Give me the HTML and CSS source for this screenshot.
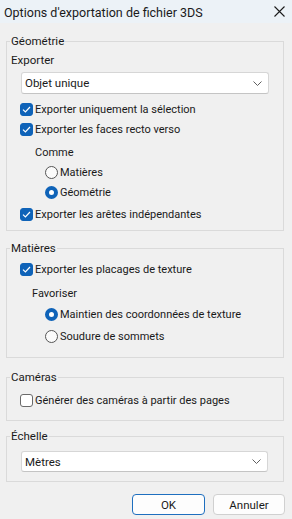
FILE: index.html
```html
<!DOCTYPE html>
<html lang="fr">
<head>
<meta charset="utf-8">
<link rel="stylesheet" href="styles.css">
</head>
<body>
<div class="window">
  <div class="titlebar">
    <span class="title">Options d'exportation de fichier 3DS</span>
    <svg class="close" width="11" height="11" viewBox="0 0 11 11"><path d="M0.5 0.5L10.5 10.5M10.5 0.5L0.5 10.5" stroke="#1b1b1b" stroke-width="1.1" fill="none"/></svg>
  </div>
  <div class="content">
    <fieldset class="group g-geo">
      <legend>Géométrie</legend>
      <div class="row label-row">Exporter</div>
      <div class="select"><span>Objet unique</span><svg class="chev" width="9" height="5" viewBox="0 0 9 5"><path d="M0.5 0.5L4.5 4.5L8.5 0.5" stroke="#5f5f5f" stroke-width="1" fill="none"/></svg></div>
      <div class="row chk-row r1"><span class="chk on"><svg width="9" height="7" viewBox="0 0 9 7"><path d="M1 3.6L3.4 6L8 1" stroke="#fff" stroke-width="1.2" fill="none"/></svg></span>Exporter uniquement la sélection</div>
      <div class="row chk-row"><span class="chk on"><svg width="9" height="7" viewBox="0 0 9 7"><path d="M1 3.6L3.4 6L8 1" stroke="#fff" stroke-width="1.2" fill="none"/></svg></span>Exporter les faces recto verso</div>
      <div class="row sub-label comme">Comme</div>
      <div class="row radio-row"><span class="radio"></span>Matières</div>
      <div class="row radio-row"><span class="radio on"></span>Géométrie</div>
      <div class="row chk-row r-last"><span class="chk on"><svg width="9" height="7" viewBox="0 0 9 7"><path d="M1 3.6L3.4 6L8 1" stroke="#fff" stroke-width="1.2" fill="none"/></svg></span>Exporter les arêtes indépendantes</div>
    </fieldset>

    <fieldset class="group g-mat">
      <legend>Matières</legend>
      <div class="row chk-row m1"><span class="chk on"><svg width="9" height="7" viewBox="0 0 9 7"><path d="M1 3.6L3.4 6L8 1" stroke="#fff" stroke-width="1.2" fill="none"/></svg></span>Exporter les placages de texture</div>
      <div class="row sub-label favor">Favoriser</div>
      <div class="row radio-row m3"><span class="radio on"></span>Maintien des coordonnées de texture</div>
      <div class="row radio-row m4"><span class="radio"></span>Soudure de sommets</div>
    </fieldset>

    <fieldset class="group g-cam">
      <legend>Caméras</legend>
      <div class="row chk-row c1"><span class="chk"></span>Générer des caméras à partir des pages</div>
    </fieldset>

    <fieldset class="group g-ech">
      <legend>Échelle</legend>
      <div class="select sel2"><span>Mètres</span><svg class="chev" width="9" height="5" viewBox="0 0 9 5"><path d="M0.5 0.5L4.5 4.5L8.5 0.5" stroke="#5f5f5f" stroke-width="1" fill="none"/></svg></div>
    </fieldset>

    <div class="buttons">
      <button class="btn default">OK</button>
      <button class="btn cancel">Annuler</button>
    </div>
  </div>
</div>
</body>
</html>
```

FILE: styles.css
```css
html, body {
  margin: 0;
  padding: 0;
}
body {
  width: 292px;
  height: 519px;
  background: #f0f0f0;
  font-family: Roboto, "Noto Sans", sans-serif;
  font-size: 11px;
  color: #1a1a1a;
  overflow: hidden;
}
.window {
  display: flex;
  flex-direction: column;
}
.titlebar {
  height: 23px;
  background: #ecf2f7;
  display: flex;
  align-items: center;
  justify-content: space-between;
  padding: 0 7px 0 4px;
}
.title {
  font-size: 12.5px;
  color: #1a1a1a;
  margin-top: 1px;
}
.close {
  margin-top: -1px;
}
.content {
  padding: 10px 8px 0 6px;
  display: flex;
  flex-direction: column;
}
.group {
  margin: 0;
  padding: 0 0 0 13px;
  border: 1px solid #dadada;
  border-radius: 0;
  min-width: 0;
}
.group legend {
  line-height: 16px;
  padding: 0 1px;
  margin-left: -10px;
  color: #1a1a1a;
  font-size: 11.5px;
}
.row {
  height: 20px;
  display: flex;
  align-items: center;
  white-space: nowrap;
}
.label-row {
  margin-top: 1px;
  margin-left: -9px;
  font-size: 11.5px;
}
.select {
  margin: 2px 14px 0 1px;
  height: 22px;
  box-sizing: border-box;
  background: #fff;
  border: 1px solid #d6d6d6;
  border-bottom-color: #c4c4c4;
  border-radius: 3px;
  display: flex;
  align-items: center;
  justify-content: space-between;
  padding: 0 6px 0 3px;
  font-size: 11.5px;
}
.chk {
  width: 13px;
  height: 13px;
  box-sizing: border-box;
  border-radius: 3px;
  border: 1px solid #6a6a6a;
  background: #fff;
  margin-right: 2px;
  display: flex;
  align-items: center;
  justify-content: center;
  flex: none;
}
.chk.on {
  background: #0f63b8;
  border-color: #0f63b8;
}
.radio {
  width: 13px;
  height: 13px;
  box-sizing: border-box;
  border-radius: 50%;
  border: 1px solid #555;
  background: #fbfbfb;
  margin-right: 2px;
  flex: none;
}
.radio.on {
  border: 4px solid #0f63b8;
  background: #fff;
}
.r1 { margin-top: 5px; }
.comme { margin-top: 3px; margin-left: 15px; }
.radio-row { margin-left: 25px; }
.r-last { margin-top: 2px; }
.g-geo { padding-bottom: 6px; }
.g-mat { margin-top: 9px; padding-bottom: 11px; }
.m1 { margin-top: 3px; }
.favor { margin-top: 4px; margin-left: 12px; }
.m3 { margin-top: 1px; }
.m4 { margin-top: 2px; }
.g-cam { margin-top: 11px; padding-bottom: 10px; }
.c1 { margin-top: 5px; }
.g-ech { margin-top: 7px; padding-bottom: 9px; }
.sel2 { margin-top: 7px; height: 21px; margin-right: 15px; }
.buttons {
  display: flex;
  justify-content: flex-end;
  gap: 8px;
  margin-top: 12px;
  margin-right: -1px;
}
.btn {
  height: 21px;
  box-sizing: border-box;
  font-family: inherit;
  font-size: 11.5px;
  color: #1a1a1a;
  background: #fdfdfd;
  border: 1px solid #d0d0d0;
  border-radius: 4px;
  padding: 0;
}
.btn.default {
  width: 73px;
  border-color: #1e6fbf;
}
.btn.cancel {
  width: 72px;
}
```
